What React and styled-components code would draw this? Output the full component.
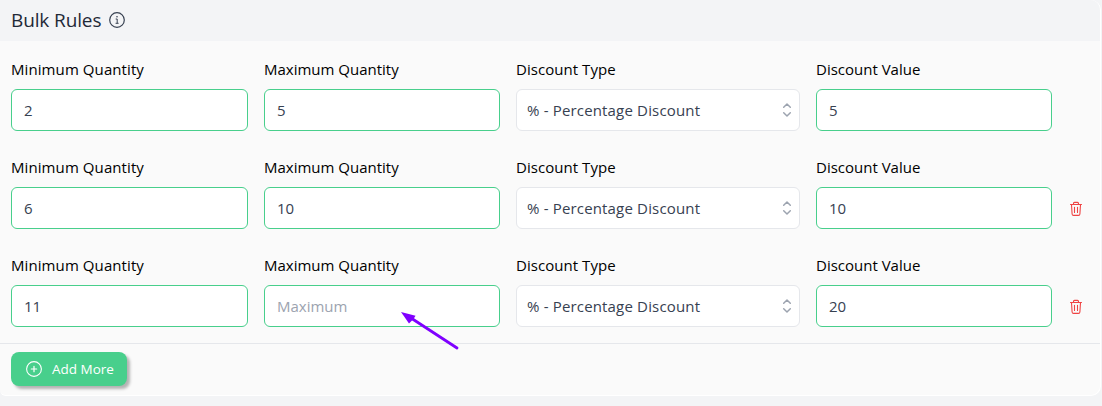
import styled, { createGlobalStyle } from "styled-components";

const GlobalStyle = createGlobalStyle`
  * {
    box-sizing: border-box;
  }
  body {
    margin: 0;
    background-color: #f3f4f6;
    font-family: "Open Sans", "Noto Sans", sans-serif;
    font-size: 16px;
    line-height: 24px;
  }
`;

const Card = styled.section`
  position: relative;
  width: 1101px;
  height: 396px;
  margin-bottom: 10px;
  overflow: hidden;
  background-color: #fafafa;
  border: solid white;
  border-width: 0 1px 1px 0;
  border-radius: 0 10px 10px 6px;
`;

const Header = styled.header`
  display: flex;
  align-items: center;
  height: 41px;
  padding: 0 11px 1px;
  background-color: #f3f4f6;
`;

const Title = styled.h2`
  width: 90px;
  margin: 0 8px 0 0;
  color: #1f2937;
  font-size: 19px;
  font-weight: 400;
  letter-spacing: -0.12px;
  white-space: nowrap;
`;

const Rules = styled.div`
  height: 303px;
  padding: 16px 11px 0;
  border-bottom: 1px solid #e5e7eb;
`;

const Rule = styled.div`
  display: grid;
  grid-template-columns: 237px 236px 284px 236px 16px;
  column-gap: 16px;
  height: 98px;
`;

const Field = styled.label`
  display: flex;
  flex-direction: column;
  gap: 8px;
`;

const Label = styled.span`
  color: black;
  font-size: 15px;
  letter-spacing: ${(props) => props.$spacing || 0}px;
  white-space: nowrap;
`;

const Input = styled.input`
  width: 100%;
  height: 42px;
  padding: 0 12px 1px;
  color: #374151;
  background-color: white;
  border: 1px solid #48cf8c;
  border-radius: 6px;
  font: inherit;
  font-size: 15px;
  outline: none;
  &::placeholder {
    color: #9ca3af;
    opacity: 1;
  }
`;

const Select = styled.div`
  display: flex;
  align-items: center;
  justify-content: space-between;
  height: 42px;
  padding: 0 2px 0 10px;
  color: #374151;
  background-color: white;
  border: 1px solid #e5e7eb;
  border-radius: 6px;
  font-size: 15px;
  letter-spacing: 0.17px;
`;

const DeleteButton = styled.button`
  display: flex;
  align-self: start;
  width: 16px;
  height: 16px;
  margin-top: 46px;
  padding: 0;
  color: #ef4444;
  background: none;
  border: none;
`;

const Footer = styled.footer`
  padding: 8px 11px;
`;

const AddButton = styled.button`
  display: flex;
  align-items: center;
  gap: 10px;
  width: 116px;
  height: 34px;
  padding: 0 0 0 15px;
  color: white;
  background-color: #48cf8c;
  border: none;
  border-radius: 8px;
  box-shadow: 3px 3px 3px #b3b3b3;
  font: inherit;
  font-size: 13.5px;
  font-weight: 500;
  white-space: nowrap;
`;

const Pointer = styled.svg`
  position: absolute;
  top: 308px;
  left: 396px;
`;

function InfoIcon() {
  return (
    <svg width="16" height="16" viewBox="0 0 16 16" fill="none" stroke="#374151">
      <circle cx="8" cy="8" r="7.3" strokeWidth="1.2" />
      <path d="M6.7 7h1.5v4.2M6.6 11.3h3" />
      <circle cx="8" cy="4.8" r="0.8" fill="#374151" stroke="none" />
    </svg>
  );
}

function SelectorIcon() {
  return (
    <svg width="20" height="20" viewBox="0 0 20 20" fill="none" stroke="#9ca3af" strokeWidth="1.5" strokeLinecap="round" strokeLinejoin="round">
      <path d="M6.7 7.2L10 4l3.3 3.2M6.7 12.8L10 16l3.3-3.2" />
    </svg>
  );
}

function TrashIcon() {
  return (
    <svg width="16" height="16" viewBox="0 0 16 16" fill="none" stroke="currentColor" strokeWidth="1.1" strokeLinecap="round" strokeLinejoin="round">
      <path d="M2.5 3.5h11M5.5 3.3v-.9c0-.6.4-1 1-1h3c.6 0 1 .4 1 1v.9M3.5 3.7l.6 9.3c.1.9.6 1.4 1.4 1.4h5c.8 0 1.3-.5 1.4-1.4l.6-9.3M6.5 6.2v5.2M9.5 6.2v5.2" />
    </svg>
  );
}

function PlusIcon() {
  return (
    <svg width="16" height="16" viewBox="0 0 16 16" fill="none" stroke="white" strokeLinecap="round">
      <circle cx="8" cy="8" r="7.4" strokeWidth="1.1" />
      <path d="M8 5.3v5.4M5.3 8h5.4" strokeWidth="1.2" />
    </svg>
  );
}

const rules = [
  { id: 1, min: "2", max: "5", value: "5" },
  { id: 2, min: "6", max: "10", value: "10" },
  { id: 3, min: "11", max: "", value: "20" },
];

function App() {
  return (
    <>
      <GlobalStyle />
      <Card>
        <Header>
          <Title>Bulk Rules</Title>
          <InfoIcon />
        </Header>
        <Rules>
          {rules.map((rule, index) => (
            <Rule key={rule.id}>
              <Field>
                <Label $spacing={0.09}>Minimum Quantity</Label>
                <Input defaultValue={rule.min} placeholder="Minimum" />
              </Field>
              <Field>
                <Label>Maximum Quantity</Label>
                <Input defaultValue={rule.max} placeholder="Maximum" />
              </Field>
              <Field as="div">
                <Label $spacing={0.05}>Discount Type</Label>
                <Select>
                  <span>% - Percentage Discount</span>
                  <SelectorIcon />
                </Select>
              </Field>
              <Field>
                <Label>Discount Value</Label>
                <Input defaultValue={rule.value} placeholder="Value" />
              </Field>
              {index > 0 && (
                <DeleteButton aria-label="Delete rule">
                  <TrashIcon />
                </DeleteButton>
              )}
            </Rule>
          ))}
        </Rules>
        <Footer>
          <AddButton>
            <PlusIcon />
            Add More
          </AddButton>
        </Footer>
        <Pointer width="66" height="44" viewBox="0 0 66 44">
          <path d="M15 10L61 40" stroke="#7f00ff" strokeWidth="2.8" strokeLinecap="round" />
          <path d="M5 4L19.5 7.8L17.5 11L13 15.5Z" fill="#7f00ff" />
        </Pointer>
      </Card>
    </>
  );
}
export default App;
